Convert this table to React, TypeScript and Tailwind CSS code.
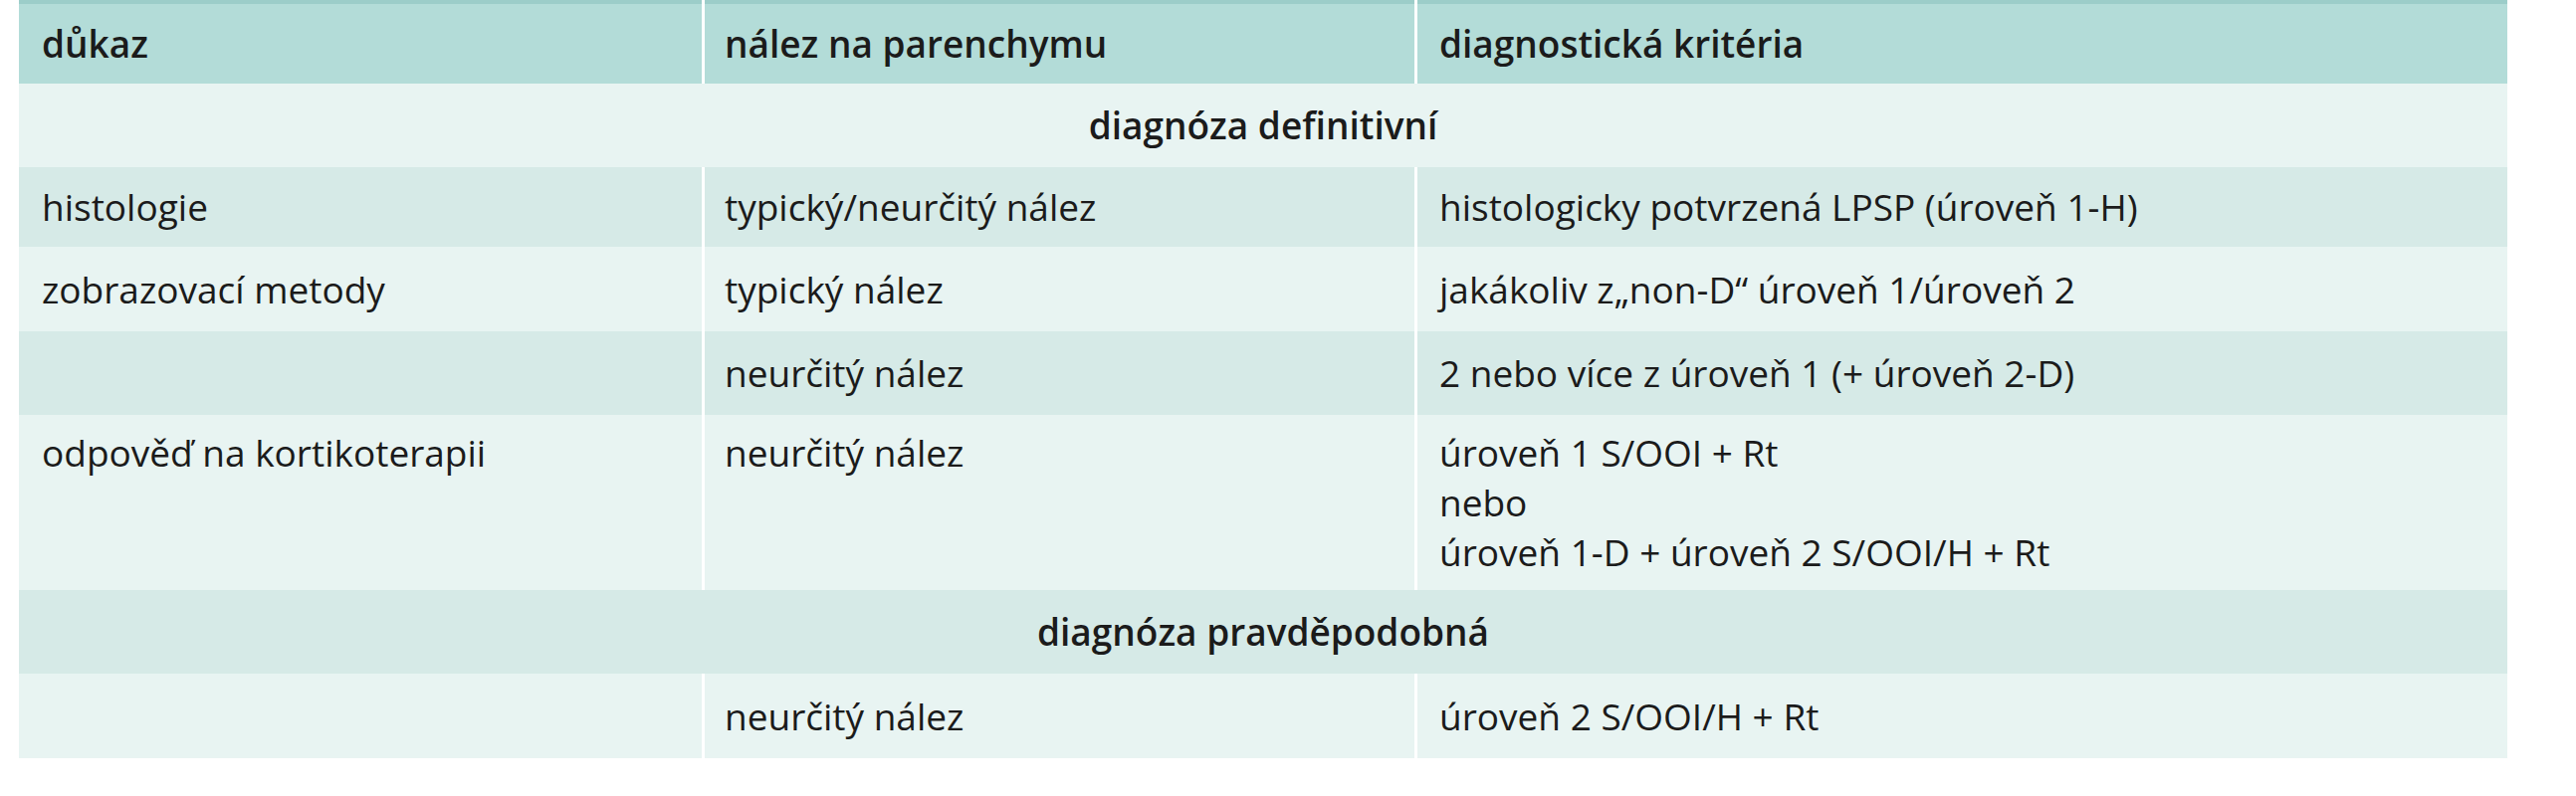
const rows = [
    { type: "section", label: "diagnóza definitivní", tone: "light", h: "h-[84px]" },
    { type: "row", cells: ["histologie", "typický/neurčitý nález", ["histologicky potvrzená LPSP (úroveň 1-H)"]], tone: "dark", h: "h-[80px]" },
    { type: "row", cells: ["zobrazovací metody", "typický nález", ["jakákoliv z„non-D“ úroveň 1/úroveň 2"]], tone: "light", h: "h-[85px]" },
    { type: "row", cells: ["", "neurčitý nález", ["2 nebo více z úroveň 1 (+ úroveň 2-D)"]], tone: "dark", h: "h-[84px]" },
    {
        type: "row",
        cells: [
            "odpověď na kortikoterapii",
            "neurčitý nález",
            ["úroveň 1 S/OOI + Rt", "nebo", "úroveň 1-D + úroveň 2 S/OOI/H + Rt"],
        ],
        tone: "light",
        h: "h-[176px]",
    },
    { type: "section", label: "diagnóza pravděpodobná", tone: "dark", h: "h-[84px]" },
    { type: "row", cells: ["", "neurčitý nález", ["úroveň 2 S/OOI/H + Rt"]], tone: "light", h: "h-[85px]" },
] as const;

export default function App() {
    return (
        <div
            className="min-h-screen bg-white pl-[19px] text-[#1b1b1b] text-[37px] leading-[50px]"
            style={{ fontFamily: "'Open Sans', 'Liberation Sans', sans-serif" }}
        >
            <div className="w-[2500px]">
                {/* Header */}
                <div className="h-[4px] bg-[#9ccdc9]"></div>
                <div className="flex h-[80px] bg-[#b3dcd8] font-semibold">
                    <div className="w-[686px] flex items-center pl-[23px]">důkaz</div>
                    <div className="w-[716px] flex items-center pl-[20px] border-l-[3px] border-white -mt-[4px] pt-[4px]">
                        nález na parenchymu
                    </div>
                    <div className="flex-1 flex items-center pl-[22px] border-l-[3px] border-white -mt-[4px] pt-[4px]">
                        diagnostická kritéria
                    </div>
                </div>

                {/* Body */}
                {rows.map((row, i) => {
                    const bg = row.tone === "light" ? "bg-[#e8f4f2]" : "bg-[#d6eae7]";
                    if (row.type === "section") {
                        return (
                            <div
                                key={i}
                                className={`${bg} ${row.h} flex items-center justify-center font-semibold`}
                            >
                                {row.label}
                            </div>
                        );
                    }
                    // multi-line rows keep the first two cells on the first line
                    const multi = row.cells[2].length > 1;
                    const align = multi ? "items-start pt-[13px]" : "items-center";
                    return (
                        <div key={i} className={`${bg} ${row.h} flex`}>
                            <div className={`w-[686px] flex ${align} pl-[23px]`}>{row.cells[0]}</div>
                            <div className={`w-[716px] flex ${align} pl-[20px] border-l-[3px] border-white`}>
                                {row.cells[1]}
                            </div>
                            <div className="flex-1 flex flex-col justify-center pl-[22px] border-l-[3px] border-white">
                                {row.cells[2].map((line) => (
                                    <span key={line}>{line}</span>
                                ))}
                            </div>
                        </div>
                    );
                })}
            </div>
        </div>
    );
}
